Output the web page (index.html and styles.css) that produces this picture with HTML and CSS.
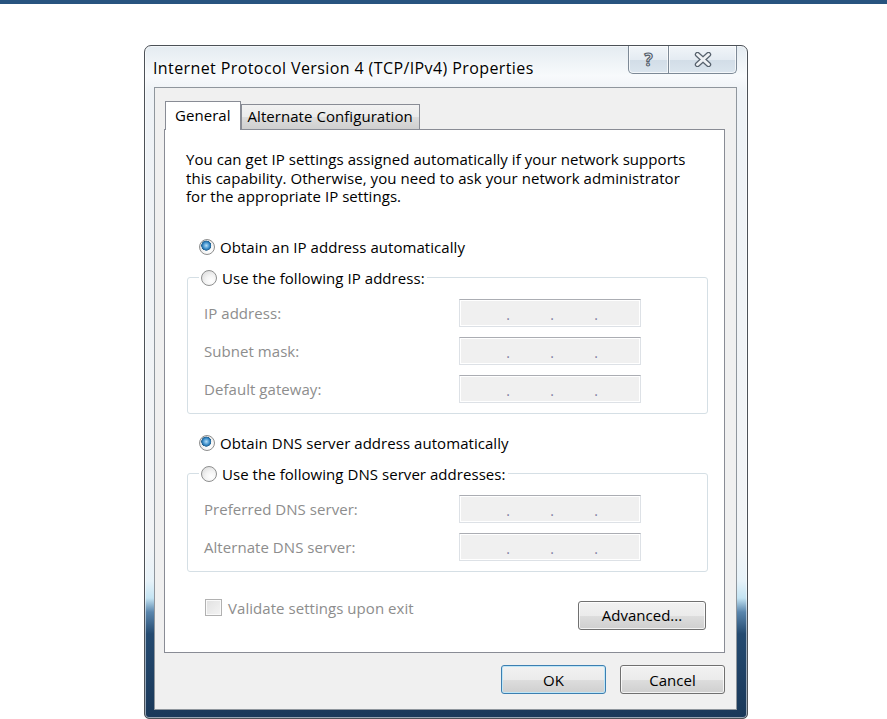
FILE: index.html
```html
<!DOCTYPE html>
<html lang="en">
  <head>
    <meta charset="UTF-8" />
    <title>Internet Protocol Version 4 (TCP/IPv4) Properties</title>
    <link rel="stylesheet" href="styles.css">
  </head>
  <body>
    <div class="topbar"></div>

    <div class="window">
      <div class="titlebar">
        <span class="title">Internet Protocol Version 4 (TCP/IPv4) Properties</span>
        <div class="caption">
          <span class="cap-btn help">?</span>
          <span class="cap-btn close">
            <svg width="18" height="15" viewBox="0 0 18 15">
              <path d="M3.5 2.5 L14.5 12.5 M14.5 2.5 L3.5 12.5" stroke="#56616d" stroke-width="5.4" stroke-linecap="round" />
              <path d="M3.5 2.5 L14.5 12.5 M14.5 2.5 L3.5 12.5" stroke="#eef1f4" stroke-width="3" stroke-linecap="round" />
            </svg>
          </span>
        </div>
      </div>

      <div class="client">
        <div class="tabs">
          <span class="tab active">General</span>
          <span class="tab">Alternate Configuration</span>
        </div>

        <div class="panel">
          <p class="intro">
            You can get IP settings assigned automatically if your network supports<br>
            this capability. Otherwise, you need to ask your network administrator<br>
            for the appropriate IP settings.
          </p>

          <div class="option first">
            <span class="radio checked"></span>Obtain an IP address automatically
          </div>

          <fieldset class="group">
            <legend class="option"><span class="radio"></span>Use the following IP address:</legend>
            <div class="field">
              <span class="field-label">IP address:</span>
              <span class="ipbox"><span class="seg">.</span><span class="seg">.</span><span class="seg">.</span></span>
            </div>
            <div class="field">
              <span class="field-label">Subnet mask:</span>
              <span class="ipbox"><span class="seg">.</span><span class="seg">.</span><span class="seg">.</span></span>
            </div>
            <div class="field">
              <span class="field-label">Default gateway:</span>
              <span class="ipbox"><span class="seg">.</span><span class="seg">.</span><span class="seg">.</span></span>
            </div>
          </fieldset>

          <div class="option second">
            <span class="radio checked"></span>Obtain DNS server address automatically
          </div>

          <fieldset class="group">
            <legend class="option"><span class="radio"></span>Use the following DNS server addresses:</legend>
            <div class="field">
              <span class="field-label">Preferred DNS server:</span>
              <span class="ipbox"><span class="seg">.</span><span class="seg">.</span><span class="seg">.</span></span>
            </div>
            <div class="field">
              <span class="field-label">Alternate DNS server:</span>
              <span class="ipbox"><span class="seg">.</span><span class="seg">.</span><span class="seg">.</span></span>
            </div>
          </fieldset>

          <div class="bottom-row">
            <span class="check-row"><span class="checkbox"></span>Validate settings upon exit</span>
            <button class="btn advanced">Advanced...</button>
          </div>
        </div>

        <div class="dialog-buttons">
          <button class="btn default">OK</button>
          <button class="btn">Cancel</button>
        </div>
      </div>
    </div>
  </body>
</html>
```

FILE: styles.css
```css
body {
  margin: 0;
  background: #ffffff;
  font-family: "Open Sans", "Noto Sans", sans-serif;
  font-size: 15px;
  letter-spacing: 0.05px;
  color: #000;
}
.topbar {
  height: 4px;
  background: #28547f;
}
.window {
  box-sizing: border-box;
  width: 604px;
  height: 674px;
  margin: 41px 0 0 144px;
  padding: 0 10px 8px 9px;
  border: 1px solid #4c5157;
  border-radius: 7px 7px 5px 5px;
  box-shadow: inset 0 0 0 1px rgba(255, 255, 255, 0.55);
  background: linear-gradient(
    180deg,
    #e4ebf1 0,
    #f8fafc 30px,
    #eef2f6 45px,
    #f2f4f6 500px,
    #e6f2f9 535px,
    #c4e4f3 552px,
    #5a86ad 566px,
    #244a70 588px,
    #1a3859 100%
  );
  display: flex;
  flex-direction: column;
}
.titlebar {
  height: 41px;
  display: flex;
  align-items: flex-start;
}
.title {
  margin: 13px 0 0 -1px;
  line-height: 18px;
  font-size: 16px;
  letter-spacing: 0.4px;
  text-shadow: 0 0 6px #fff, 0 0 3px #fff;
}
.caption {
  margin-left: auto;
  display: flex;
}
.cap-btn {
  box-sizing: border-box;
  height: 28px;
  display: flex;
  align-items: center;
  justify-content: center;
  border: 1px solid #7d8996;
  border-top: none;
  background: linear-gradient(180deg, #f1f5f9 0, #e4ebf2 50%, #d2dde7 51%, #dbe5ee 100%);
  box-shadow: inset 0 0 0 1px rgba(255, 255, 255, 0.7);
}
.help {
  width: 41px;
  border-radius: 0 0 0 5px;
  font-weight: 700;
  font-size: 17px;
  color: #e9edf1;
  -webkit-text-stroke: 1.2px #56616d;
}
.close {
  width: 69px;
  margin-left: -1px;
  border-radius: 0 0 5px 0;
}
.client {
  flex: 1;
  box-sizing: border-box;
  border: 1px solid #8f969d;
  background: #f0f0f0;
  padding: 13px 11px 0 9px;
}
.tabs {
  display: flex;
  align-items: flex-end;
  height: 28px;
  padding-left: 1px;
}
.tab {
  box-sizing: border-box;
  height: 25px;
  padding: 0 6px;
  border: 1px solid #898c95;
  border-bottom: none;
  background: linear-gradient(180deg, #f2f2f2 0, #ebebeb 50%, #dddddd 51%, #cfcfcf 100%);
  line-height: 23px;
}
.tab.active {
  position: relative;
  z-index: 1;
  height: 29px;
  margin-bottom: -1px;
  padding: 0 9px;
  background: #fff;
  line-height: 27px;
}
.panel {
  box-sizing: border-box;
  height: 524px;
  border: 1px solid #898c95;
  background: #fff;
  padding: 20px 18px 0 21px;
}
.intro {
  margin: 0;
  line-height: 18.5px;
}
.option {
  display: flex;
  align-items: center;
  height: 18px;
  line-height: 18px;
}
.option.first {
  margin: 32px 0 0 13px;
}
.option.second {
  margin: 20px 0 0 13px;
}
.radio {
  box-sizing: border-box;
  width: 16px;
  height: 16px;
  margin-right: 5px;
  border: 1px solid #8e8f8f;
  border-radius: 50%;
  background: radial-gradient(circle at 65% 70%, #ffffff 0, #f4f4f4 40%, #d6d6d6 100%);
}
.radio.checked {
  background:
    radial-gradient(circle at 45% 40%, #b8e0f8 0, #3d8fcc 28%, #1f5f8f 42%, transparent 46%),
    radial-gradient(circle at 65% 70%, #ffffff 0, #f4f4f4 40%, #d6d6d6 100%);
}
.group {
  box-sizing: border-box;
  width: 521px;
  margin: 13px 0 0 1px;
  padding: 0 15px 10px 16px;
  border: 1px solid #d5dfe5;
  border-radius: 3px;
}
.group legend {
  margin-left: -5px;
  padding: 0 2px;
}
.field {
  display: flex;
  align-items: center;
  margin-top: 10px;
}
.group legend + .field {
  margin-top: 12px;
}
.field-label {
  width: 255px;
  color: #8d8d8d;
}
.ipbox {
  box-sizing: border-box;
  width: 182px;
  height: 28px;
  display: flex;
  padding-left: 6px;
  border: 1px solid #dde1e6;
  border-top-color: #abadb3;
  background: #f0f0f0;
  box-shadow: inset 0 0 0 1px #fff;
  color: #8080a0;
  font-size: 14px;
  line-height: 30px;
}
.seg {
  width: 44px;
  text-align: right;
}
.bottom-row {
  display: flex;
  align-items: flex-start;
  margin-top: 29px;
}
.check-row {
  display: flex;
  align-items: center;
  height: 18px;
  margin: -2px 0 0 19px;
  color: #8d8d8d;
}
.checkbox {
  box-sizing: border-box;
  width: 17px;
  height: 17px;
  margin-right: 6px;
  border: 1px solid #b1b1b1;
  background: linear-gradient(135deg, #e1e1e1 0, #f4f4f4 100%);
  box-shadow: inset 0 0 0 1px #fafafa;
}
.btn {
  box-sizing: border-box;
  height: 29px;
  border: 1px solid #707070;
  border-radius: 3px;
  background: linear-gradient(180deg, #f2f2f2 0, #ebebeb 50%, #dddddd 51%, #cfcfcf 100%);
  box-shadow: inset 0 0 0 1px rgba(255, 255, 255, 0.75);
  font-family: inherit;
  font-size: 15px;
  color: #000;
  padding: 0;
}
.advanced {
  width: 128px;
  margin-left: auto;
}
.dialog-buttons {
  display: flex;
  justify-content: flex-end;
  gap: 14px;
  margin-top: 12px;
}
.dialog-buttons .btn {
  width: 105px;
}
.btn.default {
  border-color: #3c7fb1;
  box-shadow: inset 0 0 0 1px #bfe6f7;
}
```
